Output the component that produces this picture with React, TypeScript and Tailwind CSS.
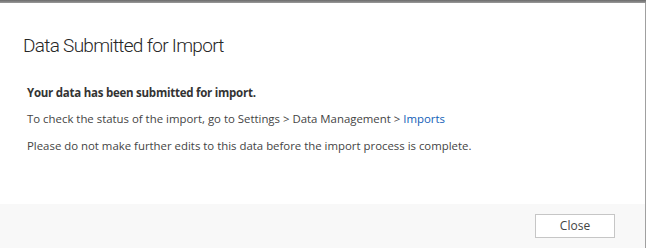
export default function App() {
    return (
        <div className="w-[646px] h-[248px] bg-white flex flex-col overflow-hidden" style={{ fontFamily: '"Open Sans", "Noto Sans", sans-serif' }}>
            {/* top frame */}
            <div className="h-[3px] bg-gradient-to-b from-[#6b6b6b] to-[#9a9a9a] shrink-0" />

            <div className="flex flex-1 min-h-0">
                <div className="flex-1 flex flex-col">
                    {/* body */}
                    <div className="flex-1 pl-[27px] pt-[30px] text-[#444444]">
                        <h1
                            className="text-[19px] font-light leading-[26px] tracking-[-0.7px] text-[#262626] -ml-[4px]"
                            style={{ fontFamily: 'Roboto, "Open Sans", sans-serif' }}
                        >
                            Data Submitted for Import
                        </h1>
                        <p className="mt-[26px] text-[11.5px] font-bold leading-[16px] tracking-[-0.25px] text-[#333333]">Your data has been submitted for import.</p>
                        <p className="mt-[10px] text-[11.4px] leading-[16px]">
                            To check the status of the import, go to Settings &gt; Data Management &gt; <span className="text-[#1160b7]">Imports</span>
                        </p>
                        <p className="mt-[11px] text-[11.4px] leading-[16px]">
                            Please do not make further edits to this data before the import process is complete.
                        </p>
                    </div>

                    {/* footer */}
                    <div className="h-[44px] bg-[#f8f8f8] flex items-start justify-end pr-[30px] pt-[10px] shrink-0">
                        <button className="w-[80px] h-[24px] bg-white border border-[#c6c6c6] text-[12px] text-[#444444]">Close</button>
                    </div>
                </div>
                <div className="w-px bg-[#a0a0a0]" />
            </div>
        </div>
    )
}
